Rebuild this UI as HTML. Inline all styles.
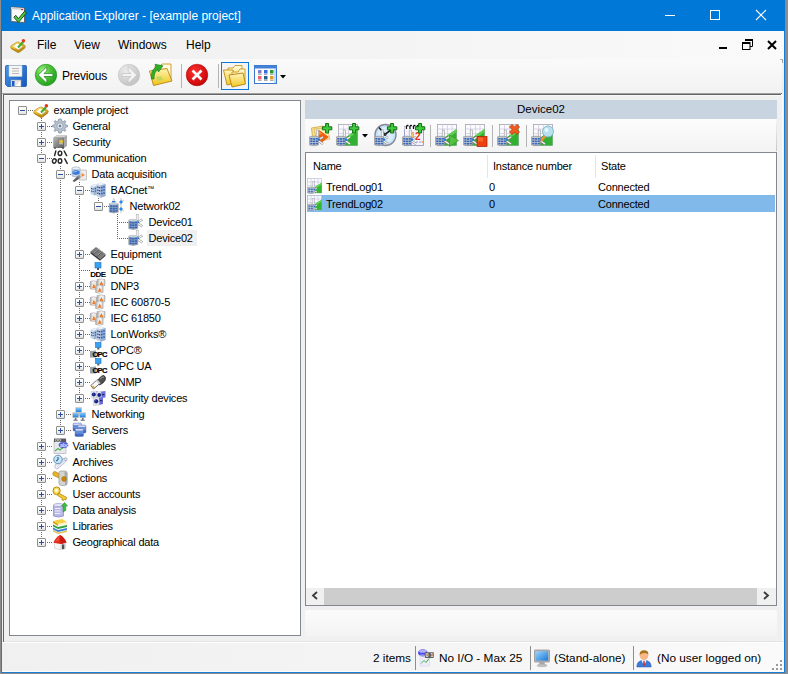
<!DOCTYPE html>
<html><head><meta charset="utf-8">
<style>
*{box-sizing:border-box}
html,body{margin:0;padding:0}
body{width:788px;height:674px;position:relative;overflow:hidden;background:#8c8c8c;font-family:"Liberation Sans",sans-serif;color:#000}
.a{position:absolute}
svg.a{overflow:visible}
#frame{left:1px;top:0;width:784px;height:673px;background:#1a7fd4}
#title{left:1px;top:0;width:784px;height:31px;background:#0078d7}
#client{left:2px;top:31px;width:782px;height:641px;background:#f0f0f0}
.tt{color:#fff;font-size:12px;white-space:nowrap}
.mt{font-size:12px;white-space:nowrap;color:#000}
.tv{font-size:11px;letter-spacing:-0.2px;white-space:nowrap;color:#000}
.lv{font-size:11px;letter-spacing:-0.2px;white-space:nowrap;color:#000}
.vd{width:1px;background:repeating-linear-gradient(to bottom,#666 0 1px,transparent 1px 2px)}
.hd{height:1px;background:repeating-linear-gradient(to right,#666 0 1px,transparent 1px 2px)}
.bx{width:9px;height:9px;border:1px solid #8f8f8f;border-radius:1px;background:linear-gradient(#fff 0%,#f6f6f6 50%,#e0e0e0 100%)}
.bx .hz{position:absolute;left:1px;top:3px;width:5px;height:1px;background:#2b4ea6}
.bx .vt{position:absolute;left:3px;top:1px;width:1px;height:5px;background:#2b4ea6}
.sb{font-size:11.8px;white-space:nowrap;color:#000}
.sep{width:1px;background:#b4b4b4}
</style></head>
<body>
<div id="frame" class="a"></div>
<div id="title" class="a"></div>
<div id="client" class="a"></div>

<!-- title bar content -->
<svg class="a" style="left:7px;top:4px" width="22" height="22" viewBox="0 0 22 22"><path d="M4 3 L17.5 4.2 L17.5 18.5 L4 17.5 Z" fill="#fafafa" stroke="#5a5a5a" stroke-width="0.9"/><path d="M4 3 L17 4 L17 6 L4 5.2Z" fill="#d0d0d0"/><rect x="14" y="5" width="2" height="1.2" fill="#e03030"/>
<path d="M6.8 13.2 L8.8 11.3 L11.4 14.6 L17.6 7.2 L19.4 9 L11.4 18.4 Z" fill="#52c83e" stroke="#16461a" stroke-width="0.9"/></svg>
<div class="a tt" style="left:32px;top:9px">Application Explorer - [example project]</div>
<div class="a" style="left:665px;top:15px;width:10px;height:1px;background:#fff"></div>
<div class="a" style="left:710px;top:10px;width:10px;height:10px;border:1px solid #fff"></div>
<svg class="a" style="left:756px;top:10px" width="10" height="10" viewBox="0 0 10 10"><path d="M0 0L10 10M10 0L0 10" stroke="#fff" stroke-width="1.1"/></svg>

<!-- menu bar -->
<div class="a" style="left:2px;top:31px;width:782px;height:28px;background:linear-gradient(to right,#f0f0f0 0%,#f3f3f3 40%,#fafafa 100%)"></div>
<svg class="a" style="left:10px;top:37px" width="16" height="16" viewBox="0 0 16 16"><defs><linearGradient id="gp" x1="0" y1="0" x2="0.6" y2="1"><stop offset="0" stop-color="#fff09a"/><stop offset="0.45" stop-color="#f0c030"/><stop offset="1" stop-color="#b07c08"/></linearGradient></defs>
<path d="M0.6 10.2 L1.2 8.6 L7 5 L8.6 5 L14.8 8.4 L15.3 9.6 L14.6 11.2 L9.4 15.2 L7.6 15.4 L1.4 11.8 Z" fill="url(#gp)" stroke="#a07208" stroke-width="0.5"/>
<path d="M0.8 10.4 L7.8 14.2 L15 10 L14.6 11.2 L9.4 15.2 L7.6 15.4 L1.4 11.8Z" fill="#b88a10"/>
<path d="M3.2 9.6 L7.2 6.6 L12.4 9.2 L8.4 12.4 Z" fill="#fdfdfd"/><path d="M8.4 12.4 L12.4 9.2 L12.8 9.8 L8.8 12.9Z" fill="#c8c8e0"/>
<path d="M7.6 9.8 L12.3 4.6 L13.6 5.8 L8.7 10.9 Z" fill="#38ba2c" stroke="#1a7a1a" stroke-width="0.4"/>
<circle cx="13.4" cy="3.8" r="1.8" fill="#e23a1a"/></svg>
<div class="a mt" style="left:37px;top:38px">File</div>
<div class="a mt" style="left:74px;top:38px">View</div>
<div class="a mt" style="left:118px;top:38px">Windows</div>
<div class="a mt" style="left:186px;top:38px">Help</div>
<div class="a" style="left:719px;top:47px;width:8px;height:2px;background:#000"></div>
<svg class="a" style="left:742px;top:39px" width="11" height="11" viewBox="0 0 11 11"><path d="M3 0.5 L10.5 0.5 L10.5 7.5 L8 7.5" fill="none" stroke="#000" stroke-width="1"/><rect x="3" y="0" width="8" height="2" fill="#000"/><rect x="0.5" y="3.5" width="7.5" height="7" fill="none" stroke="#000" stroke-width="1"/><rect x="0" y="3" width="8" height="2" fill="#000"/></svg>
<svg class="a" style="left:767px;top:40px" width="10" height="10" viewBox="0 0 10 10"><path d="M1 1L9 9M9 1L1 9" stroke="#000" stroke-width="2"/></svg>

<!-- toolbar -->
<div class="a" style="left:2px;top:59px;width:781px;height:34px;background:linear-gradient(#fafafa,#f2f2f2);border-top-right-radius:0 0;"></div>
<div class="a" style="left:2px;top:93px;width:779px;height:1px;background:#a0a0a0"></div>
<div class="a" style="left:3px;top:94px;width:778px;height:1px;background:#646464"></div><div class="a" style="left:781px;top:93px;width:1px;height:1px;background:#777"></div>
<div class="a" style="left:782px;top:60px;width:1px;height:33px;background:linear-gradient(#a0a0a0 0,#a0a0a0 3px,#f4f4f4 3px,#e8e8e8)"></div><div class="a" style="left:780px;top:59px;width:3px;height:1px;background:#b0b0b0"></div>
<svg class="a" style="left:5px;top:65px" width="22" height="22" viewBox="0 0 22 22"><defs><linearGradient id="fl" x1="0" y1="0" x2="1" y2="1"><stop offset="0" stop-color="#4a98ec"/><stop offset="1" stop-color="#1656b8"/></linearGradient></defs>
<path d="M0.5 1.5 Q0.5 0.5 1.5 0.5 L20.5 0.5 Q21.5 0.5 21.5 1.5 L21.5 20.5 Q21.5 21.5 20.5 21.5 L2.5 21.5 L0.5 19.5Z" fill="url(#fl)" stroke="#1a58b0" stroke-width="0.8"/>
<rect x="4" y="0.5" width="13" height="11" fill="#f6f6f6" stroke="#c8c8c8" stroke-width="0.5"/>
<g stroke="#b8b8b8" stroke-width="1"><line x1="7" y1="3.5" x2="14" y2="3.5"/><line x1="7" y1="6" x2="14" y2="6"/><line x1="7" y1="8.5" x2="14" y2="8.5"/></g>
<rect x="6" y="15" width="10" height="6.5" fill="#e4e4e4" stroke="#aaa" stroke-width="0.5"/><rect x="7" y="16" width="2.5" height="5" fill="#1a5ac8"/><path d="M11 21 L15 16 L15.5 21Z" fill="#fff"/></svg><svg class="a" style="left:35px;top:64px" width="22" height="22" viewBox="0 0 22 22"><defs><radialGradient id="gb" cx="0.35" cy="0.3" r="0.8"><stop offset="0" stop-color="#a8f088"/><stop offset="0.45" stop-color="#4cc238"/><stop offset="1" stop-color="#1c9818"/></radialGradient></defs>
<circle cx="11" cy="11" r="10.7" fill="url(#gb)" stroke="#1e9a1e" stroke-width="0.7"/>
<path d="M3.2 11 L11.7 2.8 L11.9 6.7 L8.9 9.6 L17.9 9.6 L17.9 12.5 L8.9 12.5 L11.9 15.3 L11.7 19.2 Z" fill="#fff" stroke="#12800f" stroke-width="0.7" stroke-linejoin="round"/></svg><svg class="a" style="left:118px;top:64px" width="22" height="22" viewBox="0 0 22 22"><defs><radialGradient id="gf" cx="0.35" cy="0.3" r="0.8"><stop offset="0" stop-color="#ececec"/><stop offset="1" stop-color="#bdbdbd"/></radialGradient></defs>
<circle cx="11" cy="11" r="10.7" fill="url(#gf)" stroke="#c2c2c2" stroke-width="0.6"/>
<path d="M18.8 11 L10.3 2.8 L10.1 6.7 L13.1 9.6 L4.1 9.6 L4.1 12.5 L13.1 12.5 L10.1 15.3 L10.3 19.2 Z" fill="#f4f4f4" stroke="#b8b8b8" stroke-width="0.6" stroke-linejoin="round"/></svg><svg class="a" style="left:147px;top:63px" width="26" height="24" viewBox="0 0 26 24"><defs><linearGradient id="oy" x1="0" y1="0" x2="0" y2="1"><stop offset="0" stop-color="#fff4b0"/><stop offset="1" stop-color="#f0c418"/></linearGradient></defs>
<path d="M8 3 L13 3 L15 1 L24 1 L24 17 L8 17Z" fill="#fffae0" stroke="#c89a20" stroke-width="0.9"/>
<path d="M2.5 8 L20 5.5 L25 18 L6.5 22.5Z" fill="url(#oy)" stroke="#b88410" stroke-width="0.9"/>
<path d="M9 14 L14 13 L16 17 L11 18Z" fill="#a8d860" opacity="0.7"/>
<path d="M4.5 16 Q3.5 7 9 4.2 L8 1.2 L16 2.8 L11.5 9 L10.5 6.8 Q7 9 7 16Z" fill="#2fae2a" stroke="#187818" stroke-width="0.6"/></svg><svg class="a" style="left:186px;top:64px" width="22" height="22" viewBox="0 0 22 22"><defs><radialGradient id="gs" cx="0.4" cy="0.35" r="0.75"><stop offset="0" stop-color="#ff3030"/><stop offset="1" stop-color="#c00000"/></radialGradient></defs>
<circle cx="11" cy="11" r="10.8" fill="url(#gs)" stroke="#a80000" stroke-width="0.5"/>
<path d="M6.5 6.5 L15.5 15.5 M15.5 6.5 L6.5 15.5" stroke="#fff" stroke-width="2.6"/></svg>
<div class="a mt" style="left:62px;top:69px;letter-spacing:-0.2px">Previous</div>
<div class="a sep" style="left:181px;top:64px;height:24px"></div>
<div class="a sep" style="left:218px;top:64px;height:24px"></div>
<div class="a" style="left:221px;top:62px;width:28px;height:28px;border:1px solid #0a78e0;background:#f4f4f4"></div>
<svg class="a" style="left:223px;top:64px" width="24" height="24" viewBox="0 0 24 24"><defs><linearGradient id="fy" x1="0" y1="0" x2="0" y2="1"><stop offset="0" stop-color="#fff6c0"/><stop offset="1" stop-color="#f2c820"/></linearGradient><linearGradient id="fb" x1="0" y1="0" x2="0" y2="1"><stop offset="0" stop-color="#fffbe0"/><stop offset="1" stop-color="#f8e070"/></linearGradient></defs>
<path d="M5 4 L10 4 L12 1.5 L19 1.5 L19 15 L5 15Z" fill="url(#fb)" stroke="#c89620" stroke-width="0.9"/>
<path d="M0.5 6 L10 6 L13 19 L4 21Z" fill="url(#fy)" stroke="#c08a10" stroke-width="0.9"/>
<path d="M9 8 L15 8 L17 5 L22 5 L22 18 L9 18Z" fill="url(#fb)" stroke="#c89620" stroke-width="0.9"/>
<path d="M6 11 L20 9 L22.5 20 L9 23Z" fill="url(#fy)" stroke="#b88008" stroke-width="0.9"/></svg><svg class="a" style="left:254px;top:65px" width="24" height="20" viewBox="0 0 24 20"><rect x="0.5" y="0.5" width="22" height="18" fill="#fff" stroke="#3a78d0" stroke-width="1"/><rect x="0.5" y="0.5" width="22" height="3" fill="#4482d8"/>
<rect x="20" y="4" width="2" height="14" fill="#c8dcf4"/>
<rect x="4" y="5" width="3.5" height="3.5" fill="#8a7ac8"/><rect x="10" y="5" width="3.5" height="3.5" fill="#3a6ae0"/><rect x="16" y="5" width="3.5" height="3.5" fill="#2a9a3a"/>
<rect x="4" y="11" width="3.5" height="3.5" fill="#f06070"/><rect x="10" y="11" width="3.5" height="3.5" fill="#2a6090"/><rect x="16" y="11" width="3.5" height="3.5" fill="#e0a030"/>
<g stroke="#999" stroke-width="0.8"><line x1="4" y1="9.5" x2="7.5" y2="9.5"/><line x1="10" y1="9.5" x2="13.5" y2="9.5"/><line x1="16" y1="9.5" x2="19.5" y2="9.5"/><line x1="4" y1="15.5" x2="7.5" y2="15.5"/><line x1="10" y1="15.5" x2="13.5" y2="15.5"/><line x1="16" y1="15.5" x2="19.5" y2="15.5"/></g></svg>
<svg class="a" style="left:280px;top:75px" width="6" height="4" viewBox="0 0 6 4"><path d="M0 0 L6 0 L3 3.5Z" fill="#000"/></svg>

<!-- main frame -->
<div class="a" style="left:3px;top:94px;width:1px;height:548px;background:#646464"></div>
<div class="a" style="left:4px;top:95px;width:780px;height:1px;background:#f8f8f8"></div>

<!-- tree -->
<div class="a" style="left:9px;top:100px;width:292px;height:536px;background:#fff;border:1px solid #828790"></div>
<div class="a vd" style="left:41px;top:118px;height:425px"></div>
<div class="a vd" style="left:60px;top:166px;height:265px"></div>
<div class="a vd" style="left:79px;top:182px;height:217px"></div>
<div class="a vd" style="left:98px;top:198px;height:9px"></div>
<div class="a vd" style="left:117px;top:214px;height:25px"></div>
<div class="a hd" style="left:28px;top:110px;width:5px"></div>
<div class="a bx" style="left:18px;top:106px"><i class="hz"></i></div>
<svg class="a" style="left:33px;top:102px" width="16" height="16" viewBox="0 0 16 16"><defs><linearGradient id="gp" x1="0" y1="0" x2="0.6" y2="1"><stop offset="0" stop-color="#fff09a"/><stop offset="0.45" stop-color="#f0c030"/><stop offset="1" stop-color="#b07c08"/></linearGradient></defs>
<path d="M0.6 10.2 L1.2 8.6 L7 5 L8.6 5 L14.8 8.4 L15.3 9.6 L14.6 11.2 L9.4 15.2 L7.6 15.4 L1.4 11.8 Z" fill="url(#gp)" stroke="#a07208" stroke-width="0.5"/>
<path d="M0.8 10.4 L7.8 14.2 L15 10 L14.6 11.2 L9.4 15.2 L7.6 15.4 L1.4 11.8Z" fill="#b88a10"/>
<path d="M3.2 9.6 L7.2 6.6 L12.4 9.2 L8.4 12.4 Z" fill="#fdfdfd"/><path d="M8.4 12.4 L12.4 9.2 L12.8 9.8 L8.8 12.9Z" fill="#c8c8e0"/>
<path d="M7.6 9.8 L12.3 4.6 L13.6 5.8 L8.7 10.9 Z" fill="#38ba2c" stroke="#1a7a1a" stroke-width="0.4"/>
<circle cx="13.4" cy="3.8" r="1.8" fill="#e23a1a"/></svg>
<div class="a tv" style="left:53.5px;top:104px">example project</div>
<div class="a hd" style="left:47px;top:126px;width:5px"></div>
<div class="a bx" style="left:37px;top:122px"><i class="hz"></i><i class="vt"></i></div>
<svg class="a" style="left:52px;top:118px" width="16" height="16" viewBox="0 0 16 16"><path d="M8 1 L9.3 1 L9.7 3 L11.3 3.7 L13 2.6 L13.9 3.5 L12.8 5.2 L13.5 6.8 L15.5 7.2 L15.5 8.8 L13.5 9.2 L12.8 10.8 L13.9 12.5 L13 13.4 L11.3 12.3 L9.7 13 L9.3 15 L6.7 15 L6.3 13 L4.7 12.3 L3 13.4 L2.1 12.5 L3.2 10.8 L2.5 9.2 L0.5 8.8 L0.5 7.2 L2.5 6.8 L3.2 5.2 L2.1 3.5 L3 2.6 L4.7 3.7 L6.3 3 L6.7 1 Z" fill="#b8c4d2" stroke="#7a8898" stroke-width="0.7"/>
<circle cx="8" cy="8" r="3.2" fill="#dfe6ee" stroke="#8a98a8" stroke-width="0.8"/><circle cx="8" cy="8" r="1.3" fill="#6d7a88"/></svg>
<div class="a tv" style="left:72.5px;top:120px">General</div>
<div class="a hd" style="left:47px;top:142px;width:5px"></div>
<div class="a bx" style="left:37px;top:138px"><i class="hz"></i><i class="vt"></i></div>
<svg class="a" style="left:52px;top:134px" width="16" height="16" viewBox="0 0 16 16"><defs><linearGradient id="sf" x1="0" y1="0" x2="1" y2="1"><stop offset="0" stop-color="#b4b4b4"/><stop offset="1" stop-color="#5a5a5a"/></linearGradient></defs><path d="M1.5 3.5 L4.5 1.5 L15 1.5 L15 11.5 L12 14 L1.5 14 Z" fill="#8a8a8a"/><path d="M1.5 3.5 L12 3.5 L15 1.5 L4.5 1.5 Z" fill="#d4d4d4"/><rect x="1.5" y="3.5" width="10.5" height="10.5" fill="url(#sf)"/><path d="M12 3.5 L15 1.5 L15 11.5 L12 14Z" fill="#a8a8a8"/><rect x="7" y="5.5" width="4" height="5" fill="#c8c8c8" stroke="#707070" stroke-width="0.4"/><circle cx="9.5" cy="7.5" r="1.7" fill="#f0d040" stroke="#a08010" stroke-width="0.4"/><rect x="2" y="13.5" width="2" height="1.2" fill="#444"/><rect x="10" y="13.5" width="2" height="1.2" fill="#444"/></svg>
<div class="a tv" style="left:72.5px;top:136px">Security</div>
<div class="a hd" style="left:47px;top:158px;width:5px"></div>
<div class="a bx" style="left:37px;top:154px"><i class="hz"></i></div>
<svg class="a" style="left:52px;top:150px" width="16" height="16" viewBox="0 0 16 16"><g stroke="#282828" stroke-width="1.45" fill="none" stroke-linecap="round"><path d="M2.6 5.6 L3.8 1"/><ellipse cx="8" cy="3.3" rx="1.8" ry="2.2"/><path d="M12.2 1 L14.6 5.6"/><ellipse cx="2.3" cy="11" rx="1.8" ry="2.2" transform="rotate(25 2.3 11)"/><ellipse cx="8" cy="11" rx="1.8" ry="2.2"/><path d="M12.8 8.8 L15.2 13.4"/></g></svg>
<div class="a tv" style="left:72.5px;top:152px">Communication</div>
<div class="a hd" style="left:66px;top:174px;width:5px"></div>
<div class="a bx" style="left:56px;top:170px"><i class="hz"></i></div>
<svg class="a" style="left:71px;top:166px" width="16" height="16" viewBox="0 0 16 16"><rect x="8" y="4" width="7.5" height="10" fill="#ececec" stroke="#a8a8a8" stroke-width="0.6"/><path d="M10.5 7 L14 9 L10.5 11Z" fill="#f08a30"/>
<path d="M1 2.2 Q5 0 9 2.2 L9 10 Q5 12 1 10Z" fill="#c8d8ee" stroke="#8090a8" stroke-width="0.5"/><ellipse cx="5" cy="2.3" rx="4" ry="1.4" fill="#eef2f8" stroke="#8898b0" stroke-width="0.4"/>
<path d="M1.5 5 L5 4 L8.5 5 L8.5 8 L5 9 L1.5 8Z" fill="#3a7ad8"/><path d="M2 6 L6 5.3" stroke="#a8d0f8" stroke-width="0.8"/>
<path d="M1.5 15 L7.5 9.5 L9.5 11.5 L3.5 16Z" fill="#5a5a5a"/><path d="M6 11 L8 9 L10 11 L8.5 12.5Z" fill="#909090"/></svg>
<div class="a tv" style="left:91.5px;top:168px">Data acquisition</div>
<div class="a hd" style="left:85px;top:190px;width:5px"></div>
<div class="a bx" style="left:75px;top:186px"><i class="hz"></i></div>
<svg class="a" style="left:90px;top:182px" width="16" height="16" viewBox="0 0 16 16"><path d="M0.5 3.5 L4 2 L8.5 3.5 L8.5 12 L4 13.5 L0.5 12Z" fill="#c8d4e4"/><path d="M0.5 3.5 L4 5 L8.5 3.5 L4 2Z" fill="#e8eef6"/><path d="M4 5 L8.5 3.5 L8.5 12 L4 13.5Z" fill="#9ab0d0"/>
<g fill="#2a5ab0"><rect x="1" y="6" width="1.2" height="1.2"/><rect x="2.6" y="6.5" width="1.2" height="1.2"/><rect x="1" y="8.5" width="1.2" height="1.2"/><rect x="2.6" y="9" width="1.2" height="1.2"/><rect x="5" y="6" width="1.2" height="1.2"/><rect x="6.8" y="5.4" width="1.2" height="1.2"/><rect x="5" y="8.5" width="1.2" height="1.2"/><rect x="6.8" y="8" width="1.2" height="1.2"/></g>
<path d="M6.5 2 L10.5 0.5 L15.5 2 L15.5 14 L10.5 15.8 L6.5 14Z" fill="#c0cee2"/><path d="M6.5 2 L10.5 3.5 L15.5 2 L10.5 0.5Z" fill="#eef2f8"/><path d="M10.5 3.5 L15.5 2 L15.5 14 L10.5 15.8Z" fill="#98aed0"/>
<g fill="#2050a8"><rect x="7.2" y="4.5" width="1.3" height="1.5"/><rect x="8.9" y="5" width="1.3" height="1.5"/><rect x="7.2" y="7.5" width="1.3" height="1.5"/><rect x="8.9" y="8" width="1.3" height="1.5"/><rect x="7.2" y="10.5" width="1.3" height="1.5"/><rect x="8.9" y="11" width="1.3" height="1.5"/><rect x="11.2" y="4.8" width="1.3" height="1.5"/><rect x="13.4" y="4.2" width="1.3" height="1.5"/><rect x="11.2" y="7.8" width="1.3" height="1.5"/><rect x="13.4" y="7.2" width="1.3" height="1.5"/><rect x="11.2" y="10.8" width="1.3" height="1.5"/><rect x="13.4" y="10.2" width="1.3" height="1.5"/></g></svg>
<div class="a tv" style="left:110.5px;top:184px">BACnet<span style="font-size:7px;position:relative;top:-3px;letter-spacing:0">™</span></div>
<div class="a hd" style="left:104px;top:206px;width:5px"></div>
<div class="a bx" style="left:94px;top:202px"><i class="hz"></i></div>
<svg class="a" style="left:109px;top:198px" width="16" height="16" viewBox="0 0 16 16"><rect x="4" y="0.8" width="1.4" height="3.5" fill="#e8e8e8" stroke="#aaa" stroke-width="0.4"/><rect x="3" y="3" width="3.5" height="1.4" fill="#2a7ae0"/><g transform="translate(0 4.5)"><path d="M0.3 1.2 Q4.7 -0.6 9.2 1.2 L9.2 9.6 Q4.7 11.2 0.3 9.6Z" fill="#8aa4c8" stroke="#8a8a8a" stroke-width="0.6"/><ellipse cx="4.75" cy="1.2" rx="4.4" ry="1.1" fill="#c8d0dc"/>
<g fill="#3a64b0"><rect x="1" y="2.8" width="2.2" height="1.6"/><rect x="3.7" y="3" width="2.2" height="1.6"/><rect x="6.4" y="2.8" width="2.2" height="1.6"/><rect x="1" y="5.2" width="2.2" height="1.6"/><rect x="3.7" y="5.4" width="2.2" height="1.6"/><rect x="6.4" y="5.2" width="2.2" height="1.6"/><rect x="1" y="7.6" width="2.2" height="1.5"/><rect x="3.7" y="7.8" width="2.2" height="1.5"/><rect x="6.4" y="7.6" width="2.2" height="1.5"/></g></g><g stroke="#9a9a9a" stroke-width="0.6"><line x1="12" y1="0" x2="12" y2="15"/><line x1="12" y1="4" x2="15" y2="2"/><line x1="12" y1="11" x2="15" y2="13"/></g><path d="M12 2 L14 4 L12 6 L10 4Z" fill="#2a8af0"/><path d="M12 9 L14 11 L12 13 L10 11Z" fill="#2a8af0"/></svg>
<div class="a tv" style="left:129.5px;top:200px">Network02</div>
<div class="a hd" style="left:117px;top:222px;width:11px"></div>
<svg class="a" style="left:128px;top:214px" width="16" height="16" viewBox="0 0 16 16"><rect x="8.2" y="0.5" width="2" height="11" fill="#f4f4f4" stroke="#a0a0a0" stroke-width="0.5"/><g transform="translate(0.5 5)"><path d="M0.3 1.2 Q4.7 -0.6 9.2 1.2 L9.2 9.6 Q4.7 11.2 0.3 9.6Z" fill="#8aa4c8" stroke="#8a8a8a" stroke-width="0.6"/><ellipse cx="4.75" cy="1.2" rx="4.4" ry="1.1" fill="#c8d0dc"/>
<g fill="#3a64b0"><rect x="1" y="2.8" width="2.2" height="1.6"/><rect x="3.7" y="3" width="2.2" height="1.6"/><rect x="6.4" y="2.8" width="2.2" height="1.6"/><rect x="1" y="5.2" width="2.2" height="1.6"/><rect x="3.7" y="5.4" width="2.2" height="1.6"/><rect x="6.4" y="5.2" width="2.2" height="1.6"/><rect x="1" y="7.6" width="2.2" height="1.5"/><rect x="3.7" y="7.8" width="2.2" height="1.5"/><rect x="6.4" y="7.6" width="2.2" height="1.5"/></g></g><path d="M10 8 L14.5 5.5 M10 9.5 L14.5 12.5" stroke="#9a9a9a" stroke-width="2.2"/><path d="M10 8 L14.5 5.5 M10 9.5 L14.5 12.5" stroke="#fafafa" stroke-width="1.1"/><rect x="9.3" y="7.3" width="1.8" height="1.8" fill="#1a7ae0"/></svg>
<div class="a tv" style="left:148.5px;top:216px">Device01</div>
<div class="a hd" style="left:117px;top:238px;width:11px"></div>
<svg class="a" style="left:128px;top:230px" width="16" height="16" viewBox="0 0 16 16"><rect x="8.2" y="0.5" width="2" height="11" fill="#f4f4f4" stroke="#a0a0a0" stroke-width="0.5"/><g transform="translate(0.5 5)"><path d="M0.3 1.2 Q4.7 -0.6 9.2 1.2 L9.2 9.6 Q4.7 11.2 0.3 9.6Z" fill="#8aa4c8" stroke="#8a8a8a" stroke-width="0.6"/><ellipse cx="4.75" cy="1.2" rx="4.4" ry="1.1" fill="#c8d0dc"/>
<g fill="#3a64b0"><rect x="1" y="2.8" width="2.2" height="1.6"/><rect x="3.7" y="3" width="2.2" height="1.6"/><rect x="6.4" y="2.8" width="2.2" height="1.6"/><rect x="1" y="5.2" width="2.2" height="1.6"/><rect x="3.7" y="5.4" width="2.2" height="1.6"/><rect x="6.4" y="5.2" width="2.2" height="1.6"/><rect x="1" y="7.6" width="2.2" height="1.5"/><rect x="3.7" y="7.8" width="2.2" height="1.5"/><rect x="6.4" y="7.6" width="2.2" height="1.5"/></g></g><path d="M10 8 L14.5 5.5 M10 9.5 L14.5 12.5" stroke="#9a9a9a" stroke-width="2.2"/><path d="M10 8 L14.5 5.5 M10 9.5 L14.5 12.5" stroke="#fafafa" stroke-width="1.1"/><rect x="9.3" y="7.3" width="1.8" height="1.8" fill="#1a7ae0"/></svg>
<div class="a" style="left:147px;top:230px;width:50px;height:16px;background:#f0f0f0"></div>
<div class="a tv" style="left:148.5px;top:232px">Device02</div>
<div class="a hd" style="left:85px;top:254px;width:5px"></div>
<div class="a bx" style="left:75px;top:250px"><i class="hz"></i><i class="vt"></i></div>
<svg class="a" style="left:90px;top:246px" width="16" height="16" viewBox="0 0 16 16"><path d="M0.5 5.5 L6 1 L15.5 8 L10 12.8Z" fill="#7a7a7a"/><path d="M0.5 5.5 L10 12.8 L10 14.8 L0.5 7.5Z" fill="#3a3a3a"/><path d="M10 12.8 L15.5 8 L15.5 10 L10 14.8Z" fill="#505050"/><g stroke="#3a3a3a" stroke-width="0.9"><line x1="3.5" y1="8" x2="9" y2="3.5"/><line x1="6.8" y1="10.5" x2="12.2" y2="6"/></g><g stroke="#b0b0b0" stroke-width="0.7"><line x1="4" y1="7" x2="9.5" y2="2.6"/><line x1="7.3" y1="9.5" x2="12.7" y2="5"/></g></svg>
<div class="a tv" style="left:110.5px;top:248px">Equipment</div>
<div class="a hd" style="left:79px;top:270px;width:11px"></div>
<svg class="a" style="left:90px;top:262px" width="16" height="16" viewBox="0 0 16 16"><rect x="5" y="0.5" width="6" height="5.5" fill="#3aa0f0" stroke="#1a70c8" stroke-width="0.6"/><rect x="7" y="6" width="2" height="2" fill="#5a5a5a"/><text x="0.2" y="15.2" font-family="Liberation Sans" font-weight="bold" font-size="8" fill="#000" letter-spacing="-0.5">DDE</text></svg>
<div class="a tv" style="left:110.5px;top:264px">DDE</div>
<div class="a hd" style="left:85px;top:286px;width:5px"></div>
<div class="a bx" style="left:75px;top:282px"><i class="hz"></i><i class="vt"></i></div>
<svg class="a" style="left:90px;top:278px" width="16" height="16" viewBox="0 0 16 16"><defs><linearGradient id="cg" x1="0" y1="0" x2="1" y2="0"><stop offset="0" stop-color="#a8a8a8"/><stop offset="0.35" stop-color="#e8e8e8"/><stop offset="0.7" stop-color="#f8f8f8"/><stop offset="1" stop-color="#b8b8b8"/></linearGradient></defs><g transform="translate(0.2 2.5)"><path d="M0 1 Q3.3 -0.5 6.6 1 L6.6 8.3 Q3.3 9.8 0 8.3Z" fill="url(#cg)" stroke="#9a9a9a" stroke-width="0.5"/><path d="M1.9799999999999998 7.626 L3.63 2.79 L5.411999999999999 7.626Z" fill="#f07a28"/></g><g transform="translate(7 0.6)"><path d="M0 1 Q4.0 -0.5 8 1 L8 7 Q4.0 8.5 0 7Z" fill="url(#cg)" stroke="#9a9a9a" stroke-width="0.5"/><path d="M2.4 6.56 L4.4 2.4 L6.56 6.56Z" fill="#f07a28"/></g><g transform="translate(5.6 6.8)"><path d="M0 1 Q3.75 -0.5 7.5 1 L7.5 7.6 Q3.75 9.1 0 7.6Z" fill="url(#cg)" stroke="#9a9a9a" stroke-width="0.5"/><path d="M2.25 7.052 L4.125 2.5799999999999996 L6.1499999999999995 7.052Z" fill="#f07a28"/></g></svg>
<div class="a tv" style="left:110.5px;top:280px">DNP3</div>
<div class="a hd" style="left:85px;top:302px;width:5px"></div>
<div class="a bx" style="left:75px;top:298px"><i class="hz"></i><i class="vt"></i></div>
<svg class="a" style="left:90px;top:294px" width="16" height="16" viewBox="0 0 16 16"><defs><linearGradient id="cg" x1="0" y1="0" x2="1" y2="0"><stop offset="0" stop-color="#a8a8a8"/><stop offset="0.35" stop-color="#e8e8e8"/><stop offset="0.7" stop-color="#f8f8f8"/><stop offset="1" stop-color="#b8b8b8"/></linearGradient></defs><g transform="translate(0.2 2.5)"><path d="M0 1 Q3.3 -0.5 6.6 1 L6.6 8.3 Q3.3 9.8 0 8.3Z" fill="url(#cg)" stroke="#9a9a9a" stroke-width="0.5"/><path d="M1.9799999999999998 7.626 L3.63 2.79 L5.411999999999999 7.626Z" fill="#f07a28"/></g><g transform="translate(7 0.6)"><path d="M0 1 Q4.0 -0.5 8 1 L8 7 Q4.0 8.5 0 7Z" fill="url(#cg)" stroke="#9a9a9a" stroke-width="0.5"/><path d="M2.4 6.56 L4.4 2.4 L6.56 6.56Z" fill="#f07a28"/></g><g transform="translate(5.6 6.8)"><path d="M0 1 Q3.75 -0.5 7.5 1 L7.5 7.6 Q3.75 9.1 0 7.6Z" fill="url(#cg)" stroke="#9a9a9a" stroke-width="0.5"/><path d="M2.25 7.052 L4.125 2.5799999999999996 L6.1499999999999995 7.052Z" fill="#f07a28"/></g></svg>
<div class="a tv" style="left:110.5px;top:296px">IEC 60870-5</div>
<div class="a hd" style="left:85px;top:318px;width:5px"></div>
<div class="a bx" style="left:75px;top:314px"><i class="hz"></i><i class="vt"></i></div>
<svg class="a" style="left:90px;top:310px" width="16" height="16" viewBox="0 0 16 16"><defs><linearGradient id="cg" x1="0" y1="0" x2="1" y2="0"><stop offset="0" stop-color="#a8a8a8"/><stop offset="0.35" stop-color="#e8e8e8"/><stop offset="0.7" stop-color="#f8f8f8"/><stop offset="1" stop-color="#b8b8b8"/></linearGradient></defs><g transform="translate(0.2 2.5)"><path d="M0 1 Q3.3 -0.5 6.6 1 L6.6 8.3 Q3.3 9.8 0 8.3Z" fill="url(#cg)" stroke="#9a9a9a" stroke-width="0.5"/><path d="M1.9799999999999998 7.626 L3.63 2.79 L5.411999999999999 7.626Z" fill="#f07a28"/></g><g transform="translate(7 0.6)"><path d="M0 1 Q4.0 -0.5 8 1 L8 7 Q4.0 8.5 0 7Z" fill="url(#cg)" stroke="#9a9a9a" stroke-width="0.5"/><path d="M2.4 6.56 L4.4 2.4 L6.56 6.56Z" fill="#f07a28"/></g><g transform="translate(5.6 6.8)"><path d="M0 1 Q3.75 -0.5 7.5 1 L7.5 7.6 Q3.75 9.1 0 7.6Z" fill="url(#cg)" stroke="#9a9a9a" stroke-width="0.5"/><path d="M2.25 7.052 L4.125 2.5799999999999996 L6.1499999999999995 7.052Z" fill="#f07a28"/></g></svg>
<div class="a tv" style="left:110.5px;top:312px">IEC 61850</div>
<div class="a hd" style="left:85px;top:334px;width:5px"></div>
<div class="a bx" style="left:75px;top:330px"><i class="hz"></i><i class="vt"></i></div>
<svg class="a" style="left:90px;top:326px" width="16" height="16" viewBox="0 0 16 16"><path d="M0.5 3.5 L4 2 L8.5 3.5 L8.5 12 L4 13.5 L0.5 12Z" fill="#c8d4e4"/><path d="M0.5 3.5 L4 5 L8.5 3.5 L4 2Z" fill="#e8eef6"/><path d="M4 5 L8.5 3.5 L8.5 12 L4 13.5Z" fill="#9ab0d0"/>
<g fill="#2a5ab0"><rect x="1" y="6" width="1.2" height="1.2"/><rect x="2.6" y="6.5" width="1.2" height="1.2"/><rect x="1" y="8.5" width="1.2" height="1.2"/><rect x="2.6" y="9" width="1.2" height="1.2"/><rect x="5" y="6" width="1.2" height="1.2"/><rect x="6.8" y="5.4" width="1.2" height="1.2"/><rect x="5" y="8.5" width="1.2" height="1.2"/><rect x="6.8" y="8" width="1.2" height="1.2"/></g>
<path d="M6.5 2 L10.5 0.5 L15.5 2 L15.5 14 L10.5 15.8 L6.5 14Z" fill="#c0cee2"/><path d="M6.5 2 L10.5 3.5 L15.5 2 L10.5 0.5Z" fill="#eef2f8"/><path d="M10.5 3.5 L15.5 2 L15.5 14 L10.5 15.8Z" fill="#98aed0"/>
<g fill="#2050a8"><rect x="7.2" y="4.5" width="1.3" height="1.5"/><rect x="8.9" y="5" width="1.3" height="1.5"/><rect x="7.2" y="7.5" width="1.3" height="1.5"/><rect x="8.9" y="8" width="1.3" height="1.5"/><rect x="7.2" y="10.5" width="1.3" height="1.5"/><rect x="8.9" y="11" width="1.3" height="1.5"/><rect x="11.2" y="4.8" width="1.3" height="1.5"/><rect x="13.4" y="4.2" width="1.3" height="1.5"/><rect x="11.2" y="7.8" width="1.3" height="1.5"/><rect x="13.4" y="7.2" width="1.3" height="1.5"/><rect x="11.2" y="10.8" width="1.3" height="1.5"/><rect x="13.4" y="10.2" width="1.3" height="1.5"/></g></svg>
<div class="a tv" style="left:110.5px;top:328px">LonWorks®</div>
<div class="a hd" style="left:85px;top:350px;width:5px"></div>
<div class="a bx" style="left:75px;top:346px"><i class="hz"></i><i class="vt"></i></div>
<svg class="a" style="left:90px;top:342px" width="16" height="16" viewBox="0 0 16 16"><rect x="5.5" y="0.5" width="5.5" height="5" fill="#3aa0f0" stroke="#1a70c8" stroke-width="0.6"/><rect x="7.3" y="5.5" width="2" height="2" fill="#5a5a5a"/><path d="M0 9 L6 8.5 L6 15.5 L0 15.5Z" fill="#98a0a8"/><text x="2.4" y="15.4" font-family="Liberation Sans" font-weight="bold" font-size="7.6" fill="#000" letter-spacing="-0.7" stroke="#000" stroke-width="0.2">OPC</text></svg>
<div class="a tv" style="left:110.5px;top:344px">OPC®</div>
<div class="a hd" style="left:85px;top:366px;width:5px"></div>
<div class="a bx" style="left:75px;top:362px"><i class="hz"></i><i class="vt"></i></div>
<svg class="a" style="left:90px;top:358px" width="16" height="16" viewBox="0 0 16 16"><rect x="5.5" y="0.5" width="5.5" height="5" fill="#3aa0f0" stroke="#1a70c8" stroke-width="0.6"/><rect x="7.3" y="5.5" width="2" height="2" fill="#5a5a5a"/><path d="M0 9 L6 8.5 L6 15.5 L0 15.5Z" fill="#98a0a8"/><text x="2.4" y="15.4" font-family="Liberation Sans" font-weight="bold" font-size="7.6" fill="#000" letter-spacing="-0.7" stroke="#000" stroke-width="0.2">OPC</text></svg>
<div class="a tv" style="left:110.5px;top:360px">OPC UA</div>
<div class="a hd" style="left:85px;top:382px;width:5px"></div>
<div class="a bx" style="left:75px;top:378px"><i class="hz"></i><i class="vt"></i></div>
<svg class="a" style="left:90px;top:374px" width="16" height="16" viewBox="0 0 16 16"><path d="M9 4.5 Q12 1 14 1.5 Q16.5 3 15 6.5 Q13.5 9.5 9.5 11 L6.5 8Z" fill="#505050" stroke="#222" stroke-width="0.7"/><path d="M10 5 Q12.5 2.5 14 3" stroke="#a8a8a8" stroke-width="0.8" fill="none"/>
<path d="M0.8 11.5 L7.5 5.5 L10.5 9 L3.5 15 Z" fill="#f8f8f8" stroke="#3a3a3a" stroke-width="0.7"/><path d="M7.5 5.5 L10.5 9 L9 10.2 L6 6.8Z" fill="#c8c8c8"/><path d="M2 12.5 L4 14.5 L5 13.6 L3 11.6Z" fill="#d8a020"/></svg>
<div class="a tv" style="left:110.5px;top:376px">SNMP</div>
<div class="a hd" style="left:85px;top:398px;width:5px"></div>
<div class="a bx" style="left:75px;top:394px"><i class="hz"></i><i class="vt"></i></div>
<svg class="a" style="left:90px;top:390px" width="16" height="16" viewBox="0 0 16 16"><g><path d="M1 1.5 L6.5 1 L7 7.5 L1.5 8Z" fill="#e8e8ee" stroke="#b0b0c0" stroke-width="0.4"/><circle cx="3.8" cy="4.5" r="2" fill="#10208a"/><circle cx="3.4" cy="4" r="0.6" fill="#6a80e0"/><path d="M6.5 1 L8.5 2 L8.5 8 L7 7.5Z" fill="#7a7ae8"/></g>
<g><path d="M6.5 2 L11 1.5 L11.5 8 L7 8.5Z" fill="#e8e8ee" stroke="#b0b0c0" stroke-width="0.4"/><circle cx="9.2" cy="5" r="1.9" fill="#10208a"/><path d="M11 1.5 L15.5 1 L15.5 7.5 L11.5 8Z" fill="#7070e0"/><rect x="12" y="4" width="2.5" height="1.2" fill="#2a2a60"/></g>
<g><path d="M3 8 L9 7.5 L9.5 15 L3.5 15.5Z" fill="#e4e4ec" stroke="#b0b0c0" stroke-width="0.4"/><circle cx="6.2" cy="11.3" r="2.1" fill="#10208a"/><circle cx="5.8" cy="10.8" r="0.6" fill="#6a80e0"/><path d="M9 7.5 L13 7.5 L13 14 L9.5 15Z" fill="#6a6ad8"/><rect x="10" y="10" width="2.2" height="1.2" fill="#2a2a60"/></g></svg>
<div class="a tv" style="left:110.5px;top:392px">Security devices</div>
<div class="a hd" style="left:66px;top:414px;width:5px"></div>
<div class="a bx" style="left:56px;top:410px"><i class="hz"></i><i class="vt"></i></div>
<svg class="a" style="left:71px;top:406px" width="16" height="16" viewBox="0 0 16 16"><defs><linearGradient id="nm" x1="0" y1="0" x2="0" y2="1"><stop offset="0" stop-color="#8ac8f8"/><stop offset="1" stop-color="#1a80e0"/></linearGradient></defs><g transform="translate(4.3 1.2)"><rect x="0" y="0" width="6.6" height="5.6" fill="#d8c8b8" /><rect x="0.6" y="0.6" width="5.4" height="4.4" fill="url(#nm)"/><rect x="2.5" y="5.6" width="1.6" height="2" fill="#707070"/><rect x="1.2" y="7.4" width="4.2" height="1" fill="#606060"/></g><g transform="translate(1.3 6.3)"><rect x="0" y="0" width="6.6" height="5.6" fill="#d8c8b8" /><rect x="0.6" y="0.6" width="5.4" height="4.4" fill="url(#nm)"/><rect x="2.5" y="5.6" width="1.6" height="2" fill="#707070"/><rect x="1.2" y="7.4" width="4.2" height="1" fill="#606060"/></g><g transform="translate(8.4 6.3)"><rect x="0" y="0" width="6.6" height="5.6" fill="#d8c8b8" /><rect x="0.6" y="0.6" width="5.4" height="4.4" fill="url(#nm)"/><rect x="2.5" y="5.6" width="1.6" height="2" fill="#707070"/><rect x="1.2" y="7.4" width="4.2" height="1" fill="#606060"/></g></svg>
<div class="a tv" style="left:91.5px;top:408px">Networking</div>
<div class="a hd" style="left:66px;top:430px;width:5px"></div>
<div class="a bx" style="left:56px;top:426px"><i class="hz"></i><i class="vt"></i></div>
<svg class="a" style="left:71px;top:422px" width="16" height="16" viewBox="0 0 16 16"><defs><linearGradient id="sv" x1="0" y1="0" x2="0" y2="1"><stop offset="0" stop-color="#8ab0ec"/><stop offset="1" stop-color="#2a58b8"/></linearGradient></defs><g transform="translate(2 1)"><rect x="0" y="0" width="8.5" height="8" rx="1.2" fill="url(#sv)" stroke="#6a6aa8" stroke-width="0.4"/><rect x="0.5" y="0.4" width="7.5" height="1.6" rx="0.8" fill="#d8d8f4"/><line x1="0.5" y1="4.5" x2="8" y2="4.5" stroke="#8aa8e8" stroke-width="0.5"/></g><g transform="translate(6.5 3)"><rect x="0" y="0" width="8.5" height="8" rx="1.2" fill="url(#sv)" stroke="#6a6aa8" stroke-width="0.4"/><rect x="0.5" y="0.4" width="7.5" height="1.6" rx="0.8" fill="#d8d8f4"/><line x1="0.5" y1="4.5" x2="8" y2="4.5" stroke="#8aa8e8" stroke-width="0.5"/></g><g transform="translate(4 6.5)"><rect x="0" y="0" width="8.5" height="8" rx="1.2" fill="url(#sv)" stroke="#6a6aa8" stroke-width="0.4"/><rect x="0.5" y="0.4" width="7.5" height="1.6" rx="0.8" fill="#d8d8f4"/><line x1="0.5" y1="4.5" x2="8" y2="4.5" stroke="#8aa8e8" stroke-width="0.5"/></g></svg>
<div class="a tv" style="left:91.5px;top:424px">Servers</div>
<div class="a hd" style="left:47px;top:446px;width:5px"></div>
<div class="a bx" style="left:37px;top:442px"><i class="hz"></i><i class="vt"></i></div>
<svg class="a" style="left:52px;top:438px" width="16" height="16" viewBox="0 0 16 16"><rect x="2" y="2" width="12" height="13.5" fill="#e8e8ee" stroke="#a8a8b0" stroke-width="0.6"/><rect x="2" y="0.5" width="12" height="3.5" fill="#5a5a5a"/><g fill="none" stroke="#e8e8e8" stroke-width="0.7"><ellipse cx="4.5" cy="2.3" rx="1" ry="1.3"/><ellipse cx="7.5" cy="2.3" rx="1" ry="1.3"/></g><path d="M3 13 L6 10.5 L8 12 L11.5 9" stroke="#4ab84a" stroke-width="1.1" fill="none"/><ellipse cx="11.5" cy="7" rx="4.5" ry="2.8" fill="#5060e0" stroke="#3a40b0" stroke-width="0.5"/><text x="8" y="8.8" font-family="Liberation Sans" font-weight="bold" font-size="5" fill="#e0e4ff">abc</text></svg>
<div class="a tv" style="left:72.5px;top:440px">Variables</div>
<div class="a hd" style="left:47px;top:462px;width:5px"></div>
<div class="a bx" style="left:37px;top:458px"><i class="hz"></i><i class="vt"></i></div>
<svg class="a" style="left:52px;top:454px" width="16" height="16" viewBox="0 0 16 16"><path d="M3 11 L12 4.5 L14.5 7 L6 14.5 Q4.5 15.5 3.5 14 Q2.5 12.5 3 11Z" fill="#f0f2f8" stroke="#9098b0" stroke-width="0.6"/><circle cx="13.5" cy="5.2" r="1.6" fill="#d8dce8" stroke="#8890a8" stroke-width="0.5"/><path d="M5 13 L12 7" stroke="#c0c4d4" stroke-width="0.6"/>
<circle cx="6" cy="5.5" r="4.3" fill="#c0e4fa" stroke="#5a88b8" stroke-width="0.9"/><path d="M6 3 L6 5.8 L4 7" stroke="#203050" stroke-width="0.9" fill="none"/></svg>
<div class="a tv" style="left:72.5px;top:456px">Archives</div>
<div class="a hd" style="left:47px;top:478px;width:5px"></div>
<div class="a bx" style="left:37px;top:474px"><i class="hz"></i><i class="vt"></i></div>
<svg class="a" style="left:52px;top:470px" width="16" height="16" viewBox="0 0 16 16"><path d="M0.8 3.5 Q1.2 1.2 3.2 1.6 L9.5 5 L8 8.5 L1.8 5.6 Q0.6 5 0.8 3.5Z" fill="#e8b420" stroke="#a07810" stroke-width="0.6"/><path d="M7 2.5 Q7 1 9 1 L13 1 Q15.2 1 15.2 3.5 L15.2 13 Q15.2 15.5 12.5 15.5 L9.5 15.5 Q7 15.5 7 13Z" fill="#d4d4d4" stroke="#8a8a8a" stroke-width="0.6"/><path d="M12.5 1.5 Q15 1.5 15 4 L15 13 Q15 15 13 15Z" fill="#a8a8a8"/><circle cx="12" cy="9" r="2.4" fill="#c88a08" stroke="#8a5a00" stroke-width="0.4"/></svg>
<div class="a tv" style="left:72.5px;top:472px">Actions</div>
<div class="a hd" style="left:47px;top:494px;width:5px"></div>
<div class="a bx" style="left:37px;top:490px"><i class="hz"></i><i class="vt"></i></div>
<svg class="a" style="left:52px;top:486px" width="16" height="16" viewBox="0 0 16 16"><ellipse cx="4.6" cy="4.8" rx="3.6" ry="3.9" fill="#f8dc58" stroke="#b88a10" stroke-width="1"/><ellipse cx="4.3" cy="4.5" rx="1.5" ry="1.7" fill="#fffbe8"/><path d="M6.6 7 L14.8 11.6 L13.6 14 L12.2 13.2 L11.4 14.6 L9.8 13.8 L10.4 12.4 L5.6 9.4Z" fill="#f4cc30" stroke="#b08410" stroke-width="0.8"/></svg>
<div class="a tv" style="left:72.5px;top:488px">User accounts</div>
<div class="a hd" style="left:47px;top:510px;width:5px"></div>
<div class="a bx" style="left:37px;top:506px"><i class="hz"></i><i class="vt"></i></div>
<svg class="a" style="left:52px;top:502px" width="16" height="16" viewBox="0 0 16 16"><path d="M1.5 3 Q6.5 0.8 11.5 3 L11.5 14 Q6.5 16.2 1.5 14Z" fill="#b8b8e8" stroke="#7878b8" stroke-width="0.6"/><ellipse cx="6.5" cy="3" rx="5" ry="1.6" fill="#e4e4f6" stroke="#8a8ac0" stroke-width="0.5"/><g stroke="#f4f4ff" stroke-width="0.9"><line x1="3" y1="6.5" x2="8.5" y2="6.5"/><line x1="3" y1="9" x2="8.5" y2="9"/><line x1="3" y1="11.5" x2="8.5" y2="11.5"/></g><path d="M12.5 0.5 L15.5 4 L13.8 4 L13.8 8.5 L11.2 9.8 L11.2 4 L9.5 4Z" fill="#38c040" stroke="#1a801a" stroke-width="0.5"/></svg>
<div class="a tv" style="left:72.5px;top:504px">Data analysis</div>
<div class="a hd" style="left:47px;top:526px;width:5px"></div>
<div class="a bx" style="left:37px;top:522px"><i class="hz"></i><i class="vt"></i></div>
<svg class="a" style="left:52px;top:518px" width="16" height="16" viewBox="0 0 16 16"><path d="M1 3 L10 1 L15 4 L6 6Z" fill="#f8d040"/><path d="M1 3 L6 6 L6 8 L1 5Z" fill="#d8a010"/><path d="M6 6 L15 4 L15 6 L6 8Z" fill="#fff2c0"/><path d="M1 6.5 L6 9 L15 7 L15 9 L6 11 L1 8.5Z" fill="#30a040"/><path d="M1 9.5 L6 12 L15 10 L15 12 L6 14 L1 11.5Z" fill="#3a80d8"/><path d="M1 12 L6 14.5 L15 12.5 L15 14 L6 16 L1 13.5Z" fill="#e0c050"/></svg>
<div class="a tv" style="left:72.5px;top:520px">Libraries</div>
<div class="a hd" style="left:47px;top:542px;width:5px"></div>
<div class="a bx" style="left:37px;top:538px"><i class="hz"></i><i class="vt"></i></div>
<svg class="a" style="left:52px;top:534px" width="16" height="16" viewBox="0 0 16 16"><path d="M2.5 8 L8 5 L13.5 8 L13.5 14.5 L8.5 15.8 L2.5 14.5Z" fill="#f6f6f6" stroke="#c0c0c0" stroke-width="0.5"/><path d="M8.5 9 L13.5 8 L13.5 14.5 L8.5 15.8Z" fill="#d4d4d4"/><rect x="10" y="10.5" width="2.2" height="4.6" fill="#505050"/>
<path d="M1.5 8.8 Q3 4 8 1 Q13 4 14.5 8.6 L8.5 10Z" fill="#e42a1a"/><path d="M8 1 Q13 4 14.5 8.6 L8.5 10Z" fill="#c81c10"/><path d="M3 8 Q4.5 4.5 8 2 L6.5 7Z" fill="#f86050" opacity="0.6"/></svg>
<div class="a tv" style="left:72.5px;top:536px">Geographical data</div>

<!-- right panel -->
<div class="a" style="left:305px;top:100px;width:472px;height:19px;background:#c8d4e0"></div>
<div class="a" style="left:305px;top:119px;width:472px;height:33px;background:linear-gradient(#fcfcfc,#f3f3f3)"></div>
<div class="a mt" style="left:517px;top:103px;font-size:11.5px">Device02</div>
<div class="a" style="left:776px;top:121px;width:1px;height:30px;background:linear-gradient(#f0f0f0,#c8c8c8)"></div>
<svg class="a" style="left:309px;top:123px" width="24" height="24" viewBox="0 0 24 24"><path d="M2.5 5 L14 3 L16 5 L16 16 L4 19Z" fill="#fae08a" stroke="#c89a30" stroke-width="0.7"/><path d="M5 6 L18 5 L21 16 L8 19Z" fill="#fdf0b8" stroke="#d0a840" stroke-width="0.6"/>
<path d="M7 10 L10 7 L20 14 L12 20 Z" fill="#f06010"/><path d="M8 10 L10 8 L13 11 L9 12Z" fill="#ff9040"/><rect x="7.2" y="7" width="2.4" height="11" fill="#f4f4f4" stroke="#9a9a9a" stroke-width="0.6"/>
<path d="M0.5 13.8 Q5 12.4 9.5 13.8 L9.5 22 Q5 23.6 0.5 22Z" fill="#c0c8d4" stroke="#8a8a8a" stroke-width="0.6"/>
<g fill="#3a66b4"><rect x="1.3" y="15" width="2.2" height="1.6"/><rect x="4" y="15.2" width="2.2" height="1.6"/><rect x="6.7" y="15" width="2.2" height="1.6"/><rect x="1.3" y="17.4" width="2.2" height="1.6"/><rect x="4" y="17.6" width="2.2" height="1.6"/><rect x="6.7" y="17.4" width="2.2" height="1.6"/><rect x="1.3" y="19.8" width="2.2" height="1.6"/><rect x="4" y="20" width="2.2" height="1.6"/><rect x="6.7" y="19.8" width="2.2" height="1.6"/></g>
<path d="M9.8 16.5 L14 14 M9.8 18 L14 21" stroke="#8a8a8a" stroke-width="2.2"/><path d="M9.8 16.5 L14 14 M9.8 18 L14 21" stroke="#f8f8f8" stroke-width="1.1"/><rect x="9" y="15.6" width="2" height="2" fill="#1a78e8"/><path d="M16.6 0.5 L19.6 0.5 L19.6 3.8 L22.8 3.8 L22.8 6.8 L19.6 6.8 L19.6 10 L16.6 10 L16.6 6.8 L13.4 6.8 L13.4 3.8 L16.6 3.8Z" fill="#3ecc3e" stroke="#127012" stroke-width="1"/></svg><svg class="a" style="left:336px;top:123px" width="24" height="24" viewBox="0 0 24 24"><rect x="2.5" y="1.5" width="19" height="21" fill="#fbfbff" stroke="#a4a4b4" stroke-width="0.8"/>
<g stroke="#c8c8dc" stroke-width="0.7"><line x1="2.5" y1="6" x2="21.5" y2="6"/><line x1="2.5" y1="10.5" x2="21.5" y2="10.5"/><line x1="2.5" y1="15" x2="21.5" y2="15"/><line x1="7.5" y1="1.5" x2="7.5" y2="22.5"/><line x1="12.5" y1="1.5" x2="12.5" y2="22.5"/><line x1="17" y1="1.5" x2="17" y2="22.5"/></g>
<path d="M7 16 L13 12 L21.5 6 L21.5 22.5 L7 22.5Z" fill="#32b032"/><path d="M13 12 L21.5 6 L21.5 9 L13 15Z" fill="#60d050"/><rect x="7.2" y="7" width="2.4" height="11" fill="#f4f4f4" stroke="#9a9a9a" stroke-width="0.6"/>
<path d="M0.5 13.8 Q5 12.4 9.5 13.8 L9.5 22 Q5 23.6 0.5 22Z" fill="#c0c8d4" stroke="#8a8a8a" stroke-width="0.6"/>
<g fill="#3a66b4"><rect x="1.3" y="15" width="2.2" height="1.6"/><rect x="4" y="15.2" width="2.2" height="1.6"/><rect x="6.7" y="15" width="2.2" height="1.6"/><rect x="1.3" y="17.4" width="2.2" height="1.6"/><rect x="4" y="17.6" width="2.2" height="1.6"/><rect x="6.7" y="17.4" width="2.2" height="1.6"/><rect x="1.3" y="19.8" width="2.2" height="1.6"/><rect x="4" y="20" width="2.2" height="1.6"/><rect x="6.7" y="19.8" width="2.2" height="1.6"/></g>
<path d="M9.8 16.5 L14 14 M9.8 18 L14 21" stroke="#8a8a8a" stroke-width="2.2"/><path d="M9.8 16.5 L14 14 M9.8 18 L14 21" stroke="#f8f8f8" stroke-width="1.1"/><rect x="9" y="15.6" width="2" height="2" fill="#1a78e8"/><path d="M16.6 0.5 L19.6 0.5 L19.6 3.8 L22.8 3.8 L22.8 6.8 L19.6 6.8 L19.6 10 L16.6 10 L16.6 6.8 L13.4 6.8 L13.4 3.8 L16.6 3.8Z" fill="#3ecc3e" stroke="#127012" stroke-width="1"/></svg><svg class="a" style="left:374px;top:123px" width="24" height="24" viewBox="0 0 24 24"><circle cx="11.5" cy="12" r="10.5" fill="#c4e2f8" stroke="#8a8a9a" stroke-width="1.4"/><circle cx="11.5" cy="12" r="8" fill="#d8eefc"/>
<path d="M5 4.5 L11 11.5 L17.5 6.5" stroke="#1a1a1a" stroke-width="1.6" fill="none"/><circle cx="11" cy="11.5" r="1.5" fill="#333"/><rect x="7.2" y="7" width="2.4" height="11" fill="#f4f4f4" stroke="#9a9a9a" stroke-width="0.6"/>
<path d="M0.5 13.8 Q5 12.4 9.5 13.8 L9.5 22 Q5 23.6 0.5 22Z" fill="#c0c8d4" stroke="#8a8a8a" stroke-width="0.6"/>
<g fill="#3a66b4"><rect x="1.3" y="15" width="2.2" height="1.6"/><rect x="4" y="15.2" width="2.2" height="1.6"/><rect x="6.7" y="15" width="2.2" height="1.6"/><rect x="1.3" y="17.4" width="2.2" height="1.6"/><rect x="4" y="17.6" width="2.2" height="1.6"/><rect x="6.7" y="17.4" width="2.2" height="1.6"/><rect x="1.3" y="19.8" width="2.2" height="1.6"/><rect x="4" y="20" width="2.2" height="1.6"/><rect x="6.7" y="19.8" width="2.2" height="1.6"/></g>
<path d="M9.8 16.5 L14 14 M9.8 18 L14 21" stroke="#8a8a8a" stroke-width="2.2"/><path d="M9.8 16.5 L14 14 M9.8 18 L14 21" stroke="#f8f8f8" stroke-width="1.1"/><rect x="9" y="15.6" width="2" height="2" fill="#1a78e8"/><path d="M16.6 0.5 L19.6 0.5 L19.6 3.8 L22.8 3.8 L22.8 6.8 L19.6 6.8 L19.6 10 L16.6 10 L16.6 6.8 L13.4 6.8 L13.4 3.8 L16.6 3.8Z" fill="#3ecc3e" stroke="#127012" stroke-width="1"/></svg><svg class="a" style="left:402px;top:123px" width="24" height="24" viewBox="0 0 24 24"><rect x="2.5" y="3.5" width="19" height="19" fill="#f4f4ff" stroke="#8a8ab8" stroke-width="0.8"/><rect x="2.5" y="3.5" width="19" height="3" fill="#fff"/>
<g stroke="#111" stroke-width="1.3" fill="none"><path d="M4.5 6 Q4 1.5 6.5 2.5"/><path d="M8 6 Q7.5 1.5 10 2.5"/><path d="M11.5 6 Q11 1.5 13.5 2.5"/><path d="M15 6 Q14.5 1.5 17 2.5"/></g>
<text x="8.5" y="15" font-family="Liberation Sans" font-weight="bold" font-size="9" fill="#f89050">1</text><text x="13" y="16.5" font-family="Liberation Sans" font-weight="bold" font-size="10" fill="#f03010">2</text>
<g fill="#c8c8e8"><rect x="14" y="18" width="2" height="2"/><rect x="17" y="18" width="2" height="2"/><rect x="19.5" y="18" width="1.5" height="2" fill="#f0b070"/></g><rect x="7.2" y="7" width="2.4" height="11" fill="#f4f4f4" stroke="#9a9a9a" stroke-width="0.6"/>
<path d="M0.5 13.8 Q5 12.4 9.5 13.8 L9.5 22 Q5 23.6 0.5 22Z" fill="#c0c8d4" stroke="#8a8a8a" stroke-width="0.6"/>
<g fill="#3a66b4"><rect x="1.3" y="15" width="2.2" height="1.6"/><rect x="4" y="15.2" width="2.2" height="1.6"/><rect x="6.7" y="15" width="2.2" height="1.6"/><rect x="1.3" y="17.4" width="2.2" height="1.6"/><rect x="4" y="17.6" width="2.2" height="1.6"/><rect x="6.7" y="17.4" width="2.2" height="1.6"/><rect x="1.3" y="19.8" width="2.2" height="1.6"/><rect x="4" y="20" width="2.2" height="1.6"/><rect x="6.7" y="19.8" width="2.2" height="1.6"/></g>
<path d="M9.8 16.5 L14 14 M9.8 18 L14 21" stroke="#8a8a8a" stroke-width="2.2"/><path d="M9.8 16.5 L14 14 M9.8 18 L14 21" stroke="#f8f8f8" stroke-width="1.1"/><rect x="9" y="15.6" width="2" height="2" fill="#1a78e8"/><path d="M16.6 0.5 L19.6 0.5 L19.6 3.8 L22.8 3.8 L22.8 6.8 L19.6 6.8 L19.6 10 L16.6 10 L16.6 6.8 L13.4 6.8 L13.4 3.8 L16.6 3.8Z" fill="#3ecc3e" stroke="#127012" stroke-width="1"/></svg><svg class="a" style="left:435px;top:123px" width="24" height="24" viewBox="0 0 24 24"><rect x="2.5" y="1.5" width="19" height="21" fill="#fbfbff" stroke="#a4a4b4" stroke-width="0.8"/>
<g stroke="#c8c8dc" stroke-width="0.7"><line x1="2.5" y1="6" x2="21.5" y2="6"/><line x1="2.5" y1="10.5" x2="21.5" y2="10.5"/><line x1="2.5" y1="15" x2="21.5" y2="15"/><line x1="7.5" y1="1.5" x2="7.5" y2="22.5"/><line x1="12.5" y1="1.5" x2="12.5" y2="22.5"/><line x1="17" y1="1.5" x2="17" y2="22.5"/></g>
<path d="M7 16 L13 12 L21.5 6 L21.5 22.5 L7 22.5Z" fill="#32b032"/><path d="M13 12 L21.5 6 L21.5 9 L13 15Z" fill="#60d050"/><rect x="7.2" y="7" width="2.4" height="11" fill="#f4f4f4" stroke="#9a9a9a" stroke-width="0.6"/>
<path d="M0.5 13.8 Q5 12.4 9.5 13.8 L9.5 22 Q5 23.6 0.5 22Z" fill="#c0c8d4" stroke="#8a8a8a" stroke-width="0.6"/>
<g fill="#3a66b4"><rect x="1.3" y="15" width="2.2" height="1.6"/><rect x="4" y="15.2" width="2.2" height="1.6"/><rect x="6.7" y="15" width="2.2" height="1.6"/><rect x="1.3" y="17.4" width="2.2" height="1.6"/><rect x="4" y="17.6" width="2.2" height="1.6"/><rect x="6.7" y="17.4" width="2.2" height="1.6"/><rect x="1.3" y="19.8" width="2.2" height="1.6"/><rect x="4" y="20" width="2.2" height="1.6"/><rect x="6.7" y="19.8" width="2.2" height="1.6"/></g>
<path d="M9.8 16.5 L14 14 M9.8 18 L14 21" stroke="#8a8a8a" stroke-width="2.2"/><path d="M9.8 16.5 L14 14 M9.8 18 L14 21" stroke="#f8f8f8" stroke-width="1.1"/><rect x="9" y="15.6" width="2" height="2" fill="#1a78e8"/><path d="M14.5 12 L23.5 17.5 L14.5 23.5Z" fill="#58c040" stroke="#2a9a2a" stroke-width="0.6"/></svg><svg class="a" style="left:463px;top:123px" width="24" height="24" viewBox="0 0 24 24"><rect x="2.5" y="1.5" width="19" height="21" fill="#fbfbff" stroke="#a4a4b4" stroke-width="0.8"/>
<g stroke="#c8c8dc" stroke-width="0.7"><line x1="2.5" y1="6" x2="21.5" y2="6"/><line x1="2.5" y1="10.5" x2="21.5" y2="10.5"/><line x1="2.5" y1="15" x2="21.5" y2="15"/><line x1="7.5" y1="1.5" x2="7.5" y2="22.5"/><line x1="12.5" y1="1.5" x2="12.5" y2="22.5"/><line x1="17" y1="1.5" x2="17" y2="22.5"/></g>
<path d="M7 16 L13 12 L21.5 6 L21.5 22.5 L7 22.5Z" fill="#32b032"/><path d="M13 12 L21.5 6 L21.5 9 L13 15Z" fill="#60d050"/><rect x="7.2" y="7" width="2.4" height="11" fill="#f4f4f4" stroke="#9a9a9a" stroke-width="0.6"/>
<path d="M0.5 13.8 Q5 12.4 9.5 13.8 L9.5 22 Q5 23.6 0.5 22Z" fill="#c0c8d4" stroke="#8a8a8a" stroke-width="0.6"/>
<g fill="#3a66b4"><rect x="1.3" y="15" width="2.2" height="1.6"/><rect x="4" y="15.2" width="2.2" height="1.6"/><rect x="6.7" y="15" width="2.2" height="1.6"/><rect x="1.3" y="17.4" width="2.2" height="1.6"/><rect x="4" y="17.6" width="2.2" height="1.6"/><rect x="6.7" y="17.4" width="2.2" height="1.6"/><rect x="1.3" y="19.8" width="2.2" height="1.6"/><rect x="4" y="20" width="2.2" height="1.6"/><rect x="6.7" y="19.8" width="2.2" height="1.6"/></g>
<path d="M9.8 16.5 L14 14 M9.8 18 L14 21" stroke="#8a8a8a" stroke-width="2.2"/><path d="M9.8 16.5 L14 14 M9.8 18 L14 21" stroke="#f8f8f8" stroke-width="1.1"/><rect x="9" y="15.6" width="2" height="2" fill="#1a78e8"/><rect x="14" y="13.5" width="10" height="10" fill="#f04010" stroke="#a02000" stroke-width="0.7"/><rect x="15" y="14.5" width="5" height="4" fill="#ff8040" opacity="0.6"/></svg><svg class="a" style="left:497px;top:123px" width="24" height="24" viewBox="0 0 24 24"><rect x="2.5" y="1.5" width="19" height="21" fill="#fbfbff" stroke="#a4a4b4" stroke-width="0.8"/>
<g stroke="#c8c8dc" stroke-width="0.7"><line x1="2.5" y1="6" x2="21.5" y2="6"/><line x1="2.5" y1="10.5" x2="21.5" y2="10.5"/><line x1="2.5" y1="15" x2="21.5" y2="15"/><line x1="7.5" y1="1.5" x2="7.5" y2="22.5"/><line x1="12.5" y1="1.5" x2="12.5" y2="22.5"/><line x1="17" y1="1.5" x2="17" y2="22.5"/></g>
<path d="M7 16 L13 12 L21.5 6 L21.5 22.5 L7 22.5Z" fill="#32b032"/><path d="M13 12 L21.5 6 L21.5 9 L13 15Z" fill="#60d050"/><rect x="7.2" y="7" width="2.4" height="11" fill="#f4f4f4" stroke="#9a9a9a" stroke-width="0.6"/>
<path d="M0.5 13.8 Q5 12.4 9.5 13.8 L9.5 22 Q5 23.6 0.5 22Z" fill="#c0c8d4" stroke="#8a8a8a" stroke-width="0.6"/>
<g fill="#3a66b4"><rect x="1.3" y="15" width="2.2" height="1.6"/><rect x="4" y="15.2" width="2.2" height="1.6"/><rect x="6.7" y="15" width="2.2" height="1.6"/><rect x="1.3" y="17.4" width="2.2" height="1.6"/><rect x="4" y="17.6" width="2.2" height="1.6"/><rect x="6.7" y="17.4" width="2.2" height="1.6"/><rect x="1.3" y="19.8" width="2.2" height="1.6"/><rect x="4" y="20" width="2.2" height="1.6"/><rect x="6.7" y="19.8" width="2.2" height="1.6"/></g>
<path d="M9.8 16.5 L14 14 M9.8 18 L14 21" stroke="#8a8a8a" stroke-width="2.2"/><path d="M9.8 16.5 L14 14 M9.8 18 L14 21" stroke="#f8f8f8" stroke-width="1.1"/><rect x="9" y="15.6" width="2" height="2" fill="#1a78e8"/><path d="M15 1.5 L17.5 4 L20 1.5 L22.5 4 L20 6.5 L22.5 9 L20 11.5 L17.5 9 L15 11.5 L12.5 9 L15 6.5 L12.5 4Z" fill="#f45a20" stroke="#b02800" stroke-width="0.7"/></svg><svg class="a" style="left:531px;top:123px" width="24" height="24" viewBox="0 0 24 24"><rect x="2.5" y="1.5" width="19" height="21" fill="#fbfbff" stroke="#a4a4b4" stroke-width="0.8"/>
<g stroke="#c8c8dc" stroke-width="0.7"><line x1="2.5" y1="6" x2="21.5" y2="6"/><line x1="2.5" y1="10.5" x2="21.5" y2="10.5"/><line x1="2.5" y1="15" x2="21.5" y2="15"/><line x1="7.5" y1="1.5" x2="7.5" y2="22.5"/><line x1="12.5" y1="1.5" x2="12.5" y2="22.5"/><line x1="17" y1="1.5" x2="17" y2="22.5"/></g>
<path d="M7 16 L13 12 L21.5 6 L21.5 22.5 L7 22.5Z" fill="#32b032"/><path d="M13 12 L21.5 6 L21.5 9 L13 15Z" fill="#60d050"/><rect x="7.2" y="7" width="2.4" height="11" fill="#f4f4f4" stroke="#9a9a9a" stroke-width="0.6"/>
<path d="M0.5 13.8 Q5 12.4 9.5 13.8 L9.5 22 Q5 23.6 0.5 22Z" fill="#c0c8d4" stroke="#8a8a8a" stroke-width="0.6"/>
<g fill="#3a66b4"><rect x="1.3" y="15" width="2.2" height="1.6"/><rect x="4" y="15.2" width="2.2" height="1.6"/><rect x="6.7" y="15" width="2.2" height="1.6"/><rect x="1.3" y="17.4" width="2.2" height="1.6"/><rect x="4" y="17.6" width="2.2" height="1.6"/><rect x="6.7" y="17.4" width="2.2" height="1.6"/><rect x="1.3" y="19.8" width="2.2" height="1.6"/><rect x="4" y="20" width="2.2" height="1.6"/><rect x="6.7" y="19.8" width="2.2" height="1.6"/></g>
<path d="M9.8 16.5 L14 14 M9.8 18 L14 21" stroke="#8a8a8a" stroke-width="2.2"/><path d="M9.8 16.5 L14 14 M9.8 18 L14 21" stroke="#f8f8f8" stroke-width="1.1"/><rect x="9" y="15.6" width="2" height="2" fill="#1a78e8"/><path d="M10 18 L14 13" stroke="#f09030" stroke-width="2.4"/><circle cx="17" cy="8.5" r="5.5" fill="#b8e0f0" stroke="#7aaac0" stroke-width="0.8"/><circle cx="15.5" cy="7" r="2" fill="#e8f8ff"/></svg>
<svg class="a" style="left:362px;top:134px" width="6" height="4" viewBox="0 0 6 4"><path d="M0 0 L6 0 L3 3.5Z" fill="#000"/></svg>
<div class="a sep" style="left:430px;top:125px;height:22px"></div>
<div class="a sep" style="left:492px;top:125px;height:22px"></div>
<div class="a sep" style="left:526px;top:125px;height:22px"></div>

<div class="a" style="left:305px;top:152px;width:472px;height:454px;background:#fff;border:1px solid #828790"></div>
<!-- list header -->
<div class="a" style="left:487px;top:155px;width:1px;height:23px;background:#e5e5e5"></div>
<div class="a" style="left:595px;top:155px;width:1px;height:23px;background:#e5e5e5"></div>
<div class="a lv" style="left:313px;top:160px">Name</div>
<div class="a lv" style="left:493px;top:160px">Instance number</div>
<div class="a lv" style="left:601px;top:160px">State</div>
<div class="a" style="left:307px;top:195px;width:468px;height:17px;background:#80b9ea"></div>
<svg class="a" style="left:307px;top:178px" width="16" height="16" viewBox="0 0 16 16"><rect x="0.5" y="0.5" width="14" height="14.5" fill="#fafaff" stroke="#b8b8c8" stroke-width="0.6"/><g stroke="#c4c4dc" stroke-width="0.6"><line x1="0.5" y1="4" x2="14.5" y2="4"/><line x1="0.5" y1="7.5" x2="14.5" y2="7.5"/><line x1="4" y1="0.5" x2="4" y2="15"/><line x1="7.5" y1="0.5" x2="7.5" y2="15"/><line x1="11" y1="0.5" x2="11" y2="15"/></g>
<path d="M8 9 L14.8 4.5 L14.8 15 L8 15Z" fill="#30b830"/><path d="M9 8.5 L14.8 4.5 L14.8 6.5 L9.5 10Z" fill="#60d850"/>
<rect x="5.6" y="3.5" width="1.6" height="8" fill="#f0f0f0" stroke="#a0a0a0" stroke-width="0.4"/>
<path d="M0.8 9.5 Q4 8.6 7 9.5 L7 15 Q4 16 0.8 15Z" fill="#b8c4d4" stroke="#8a8a8a" stroke-width="0.5"/><g fill="#4a70b8"><rect x="1.5" y="10.5" width="1.8" height="1.5"/><rect x="4" y="10.6" width="1.8" height="1.5"/><rect x="1.5" y="12.8" width="1.8" height="1.5"/><rect x="4" y="12.9" width="1.8" height="1.5"/></g>
<path d="M7.3 11.5 L10 10 M7.3 12.8 L10 14" stroke="#8a8a8a" stroke-width="1.6"/><path d="M7.3 11.5 L10 10 M7.3 12.8 L10 14" stroke="#f8f8f8" stroke-width="0.8"/><rect x="6.8" y="10.8" width="1.5" height="1.5" fill="#1a78e8"/></svg><svg class="a" style="left:307px;top:195px" width="16" height="16" viewBox="0 0 16 16"><rect x="0.5" y="0.5" width="14" height="14.5" fill="#fafaff" stroke="#b8b8c8" stroke-width="0.6"/><g stroke="#c4c4dc" stroke-width="0.6"><line x1="0.5" y1="4" x2="14.5" y2="4"/><line x1="0.5" y1="7.5" x2="14.5" y2="7.5"/><line x1="4" y1="0.5" x2="4" y2="15"/><line x1="7.5" y1="0.5" x2="7.5" y2="15"/><line x1="11" y1="0.5" x2="11" y2="15"/></g>
<path d="M8 9 L14.8 4.5 L14.8 15 L8 15Z" fill="#30b830"/><path d="M9 8.5 L14.8 4.5 L14.8 6.5 L9.5 10Z" fill="#60d850"/>
<rect x="5.6" y="3.5" width="1.6" height="8" fill="#f0f0f0" stroke="#a0a0a0" stroke-width="0.4"/>
<path d="M0.8 9.5 Q4 8.6 7 9.5 L7 15 Q4 16 0.8 15Z" fill="#b8c4d4" stroke="#8a8a8a" stroke-width="0.5"/><g fill="#4a70b8"><rect x="1.5" y="10.5" width="1.8" height="1.5"/><rect x="4" y="10.6" width="1.8" height="1.5"/><rect x="1.5" y="12.8" width="1.8" height="1.5"/><rect x="4" y="12.9" width="1.8" height="1.5"/></g>
<path d="M7.3 11.5 L10 10 M7.3 12.8 L10 14" stroke="#8a8a8a" stroke-width="1.6"/><path d="M7.3 11.5 L10 10 M7.3 12.8 L10 14" stroke="#f8f8f8" stroke-width="0.8"/><rect x="6.8" y="10.8" width="1.5" height="1.5" fill="#1a78e8"/></svg>
<div class="a lv" style="left:326px;top:181px">TrendLog01</div>
<div class="a lv" style="left:489px;top:181px">0</div>
<div class="a lv" style="left:598px;top:181px">Connected</div>
<div class="a lv" style="left:326px;top:198px">TrendLog02</div>
<div class="a lv" style="left:489px;top:198px">0</div>
<div class="a lv" style="left:598px;top:198px">Connected</div>
<!-- scrollbar -->
<div class="a" style="left:306px;top:588px;width:470px;height:17px;background:#f0f0f0"></div>
<div class="a" style="left:324px;top:588px;width:433px;height:17px;background:#cdcdcd"></div>
<svg class="a" style="left:311px;top:591px" width="8" height="9" viewBox="0 0 8 9"><path d="M6 1 L2 4.5 L6 8" fill="none" stroke="#3a3a3a" stroke-width="1.8"/></svg>
<svg class="a" style="left:762px;top:591px" width="8" height="9" viewBox="0 0 8 9"><path d="M2 1 L6 4.5 L2 8" fill="none" stroke="#3a3a3a" stroke-width="1.8"/></svg>

<div class="a" style="left:305px;top:610px;width:472px;height:26px;background:linear-gradient(#fbfbfb,#f3f3f3);border-radius:2px"></div>
<div class="a" style="left:782px;top:95px;width:1px;height:547px;background:#fafafa"></div>
<div class="a" style="left:4px;top:641px;width:779px;height:1px;background:#e4e4e4"></div>

<!-- status bar -->
<div class="a" style="left:2px;top:642px;width:782px;height:1px;background:#fff"></div>
<div class="a" style="left:2px;top:643px;width:782px;height:29px;background:linear-gradient(to right,#f0f0f0 0%,#f4f4f4 50%,#fafafa 100%)"></div><div class="a" style="left:2px;top:671px;width:782px;height:1px;background:#fafafa"></div>
<div class="a sb" style="left:373px;top:651px">2 items</div>
<div class="a sep" style="left:415px;top:646px;height:24px;background:#8e8e8e"></div>
<div class="a sb" style="left:439px;top:651px">No I/O - Max 25</div>
<div class="a sep" style="left:530px;top:646px;height:24px;background:#8e8e8e"></div>
<div class="a sb" style="left:554px;top:651px">(Stand-alone)</div>
<div class="a sep" style="left:633px;top:646px;height:24px;background:#8e8e8e"></div>
<div class="a sb" style="left:657px;top:651px">(No user logged on)</div>
<svg class="a" style="left:416px;top:648px" width="18" height="18" viewBox="0 0 18 18"><rect x="4" y="8" width="9.5" height="10" fill="#eeeefa" stroke="#d4d4ec" stroke-width="0.6"/><path d="M5 15.5 L8 12.5 L10 14.5 L13 10.5" stroke="#40b040" stroke-width="1" fill="none"/>
<ellipse cx="6.8" cy="4.8" rx="4.8" ry="3.6" fill="#4a4ae8"/><ellipse cx="6.8" cy="3.2" rx="3.8" ry="1.6" fill="#c8c8f8" opacity="0.8"/><ellipse cx="6.5" cy="7.2" rx="3" ry="0.9" fill="#c8c8f8" opacity="0.6"/>
<rect x="8.8" y="4.2" width="9" height="5.8" rx="0.8" fill="#5e5e5e"/><text x="9.6" y="9" font-family="Liberation Sans" font-weight="bold" font-size="5.6" fill="#e8e8e8">0 1</text></svg><svg class="a" style="left:534px;top:649px" width="16" height="18" viewBox="0 0 16 18"><defs><linearGradient id="mg" x1="0" y1="0" x2="1" y2="1"><stop offset="0" stop-color="#9ad4fc"/><stop offset="1" stop-color="#1a78d8"/></linearGradient></defs><rect x="0.5" y="1" width="15" height="12" rx="0.8" fill="#b8b8b8" stroke="#7a7a7a" stroke-width="0.6"/><rect x="1.8" y="2.2" width="12.4" height="9.4" fill="url(#mg)"/><path d="M5.5 13 L10.5 13 L11 15.5 L5 15.5Z" fill="#a8a8a8"/><ellipse cx="8" cy="16.5" rx="5" ry="1.2" fill="#c4c4c4" stroke="#909090" stroke-width="0.4"/></svg><svg class="a" style="left:636px;top:649px" width="16" height="18" viewBox="0 0 16 18"><path d="M0.8 18 Q0.5 11.5 8 11.2 Q15.5 11.5 15.2 18Z" fill="#3a7ad8" stroke="#2a5aa8" stroke-width="0.5"/><path d="M5.5 11.3 L8 17 L10.5 11.3Z" fill="#fff"/><path d="M7.4 12 L8.6 12 L9 16 L8 17.2 L7 16Z" fill="#d02020"/><ellipse cx="8" cy="6.5" rx="4.3" ry="4.6" fill="#f8b888"/><path d="M3.6 6 Q3.3 1.3 8 1.3 Q12.5 1.3 12.4 5.5 Q11 3.8 8.5 4 Q5.5 4 3.6 6Z" fill="#a8721a"/></svg>
<div class="a" style="left:780px;top:660px;width:2px;height:2px;background:#9a9a9a"></div>
<div class="a" style="left:776px;top:664px;width:2px;height:2px;background:#9a9a9a"></div>
<div class="a" style="left:780px;top:664px;width:2px;height:2px;background:#9a9a9a"></div>
<div class="a" style="left:772px;top:668px;width:2px;height:2px;background:#9a9a9a"></div>
<div class="a" style="left:776px;top:668px;width:2px;height:2px;background:#9a9a9a"></div>
<div class="a" style="left:780px;top:668px;width:2px;height:2px;background:#9a9a9a"></div>

</body></html>
